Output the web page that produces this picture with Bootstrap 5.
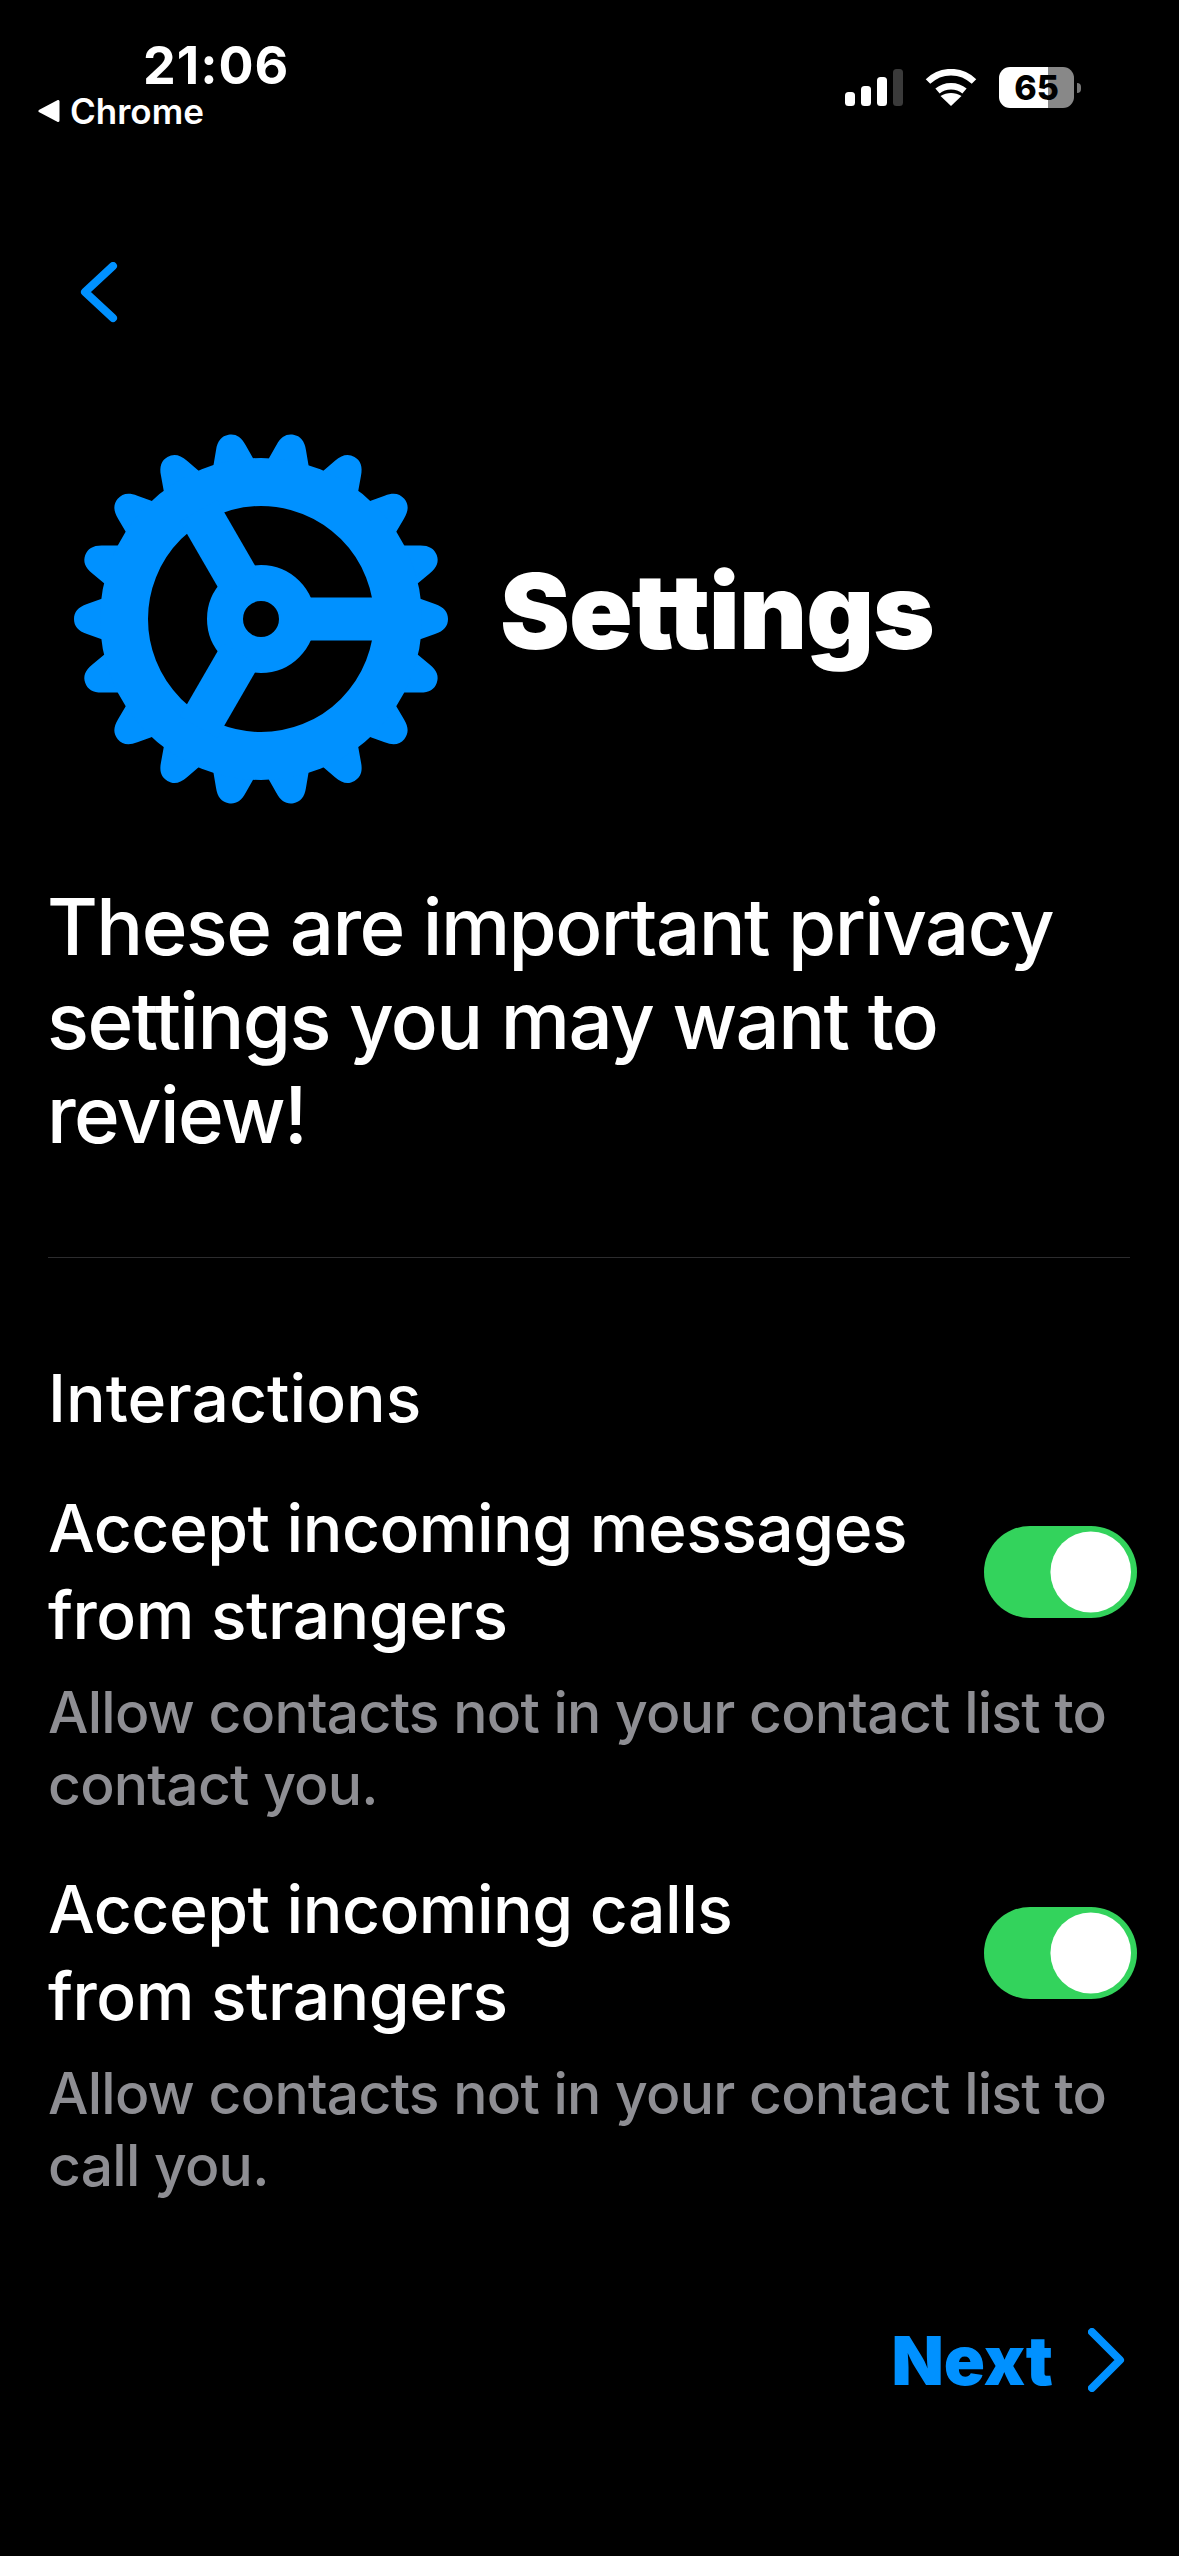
<!DOCTYPE html>
<html lang="en">
<head>
  <meta charset="UTF-8" />
  <meta name="viewport" content="width=device-width, initial-scale=1" />
  <title>Settings</title>
  <link href="https://cdn.jsdelivr.net/npm/bootstrap@5.3.0/dist/css/bootstrap.min.css" rel="stylesheet" />
  <style>
    body {
      background-color: #000;
      color: #fff;
      font-family: Inter, "Liberation Sans", sans-serif;
    }
    .phone-page {
      width: 1179px;
      height: 2556px;
      overflow: hidden;
    }
    .status-strip {
      height: 130px;
      padding: 45px 98px 0 38px;
    }
    .status-time {
      font-size: 52px;
      font-weight: 700;
      line-height: 42px;
      margin-left: 105px;
      letter-spacing: 1px;
    }
    .status-app {
      font-size: 35px;
      font-weight: 600;
      line-height: 36px;
      margin-top: 6px;
    }
    .status-icons {
      margin-top: 22px;
      height: 41px;
      gap: 22px;
    }
    .battery-box {
      width: 75px;
      height: 41px;
      border-radius: 11px;
      background: linear-gradient(90deg, #fff 49px, #888 49px);
      color: #000;
      font-size: 34px;
      font-weight: 800;
      line-height: 41px;
      text-align: center;
    }
    .battery-nub {
      width: 4px;
      height: 10px;
      margin-left: -19px;
      background: #777;
      border-radius: 0 4px 4px 0;
    }
    .back-row {
      padding: 132px 0 0 80px;
      height: 192px;
    }
    .app-head {
      padding: 110px 0 0 74px;
      gap: 52px;
    }
    .app-title {
      font-size: 105px;
      font-weight: 900;
      line-height: 1;
      margin: 0 0 18px;
      letter-spacing: -1px;
    }
    .intro-text {
      font-size: 78px;
      line-height: 94px;
      margin: 74px 40px 0 47px;
      font-weight: 500;
      letter-spacing: -1.6px;
    }
    .page-rule {
      margin: 95px 49px 0 48px;
      border-top: 1px solid #2c2c2e;
      opacity: 1;
    }
    .group-title {
      font-size: 66px;
      font-weight: 500;
      line-height: 80px;
      margin: 100px 48px 0;
    }
    .pref-row {
      margin: 0 42px 0 48px;
      gap: 20px;
    }
    .pref-row-first {
      margin-top: 47px;
    }
    .pref-row-next {
      margin-top: 45px;
    }
    .pref-name {
      font-size: 66px;
      font-weight: 500;
      line-height: 87px;
      letter-spacing: -0.5px;
    }
    .pref-note {
      font-size: 57px;
      line-height: 72px;
      color: #8e8e93;
      font-weight: 500;
      margin-top: 18px;
      letter-spacing: -0.75px;
    }
    .pref-switch {
      padding: 0;
      margin: 0;
      min-height: 0;
    }
    .pref-switch .form-check-input,
    .pref-switch .form-check-input:checked {
      width: 153px;
      height: 92px;
      margin: 0;
      border: 0;
      border-radius: 46px;
      background-color: #33d35c;
      background-size: 108px 108px;
      background-position: right -7.5px center;
    }
    .next-link {
      color: #0091ff;
      font-size: 68px;
      font-weight: 900;
      line-height: 1;
      text-decoration: none;
    }
    .next-row {
      margin-top: 124px;
      padding-right: 53px;
      gap: 35px;
    }
  </style>
</head>
<body>
  <div class="phone-page">
    <div class="status-strip d-flex justify-content-between align-items-start">
      <div>
        <div class="status-time">21:06</div>
        <div class="status-app d-flex align-items-center gap-2">
          <svg width="24" height="22" viewBox="0 0 24 22"><path d="M2 11 20 1.500V20.500Z" fill="#fff" stroke="#fff" stroke-width="3" stroke-linejoin="round"/></svg>
          <span>Chrome</span>
        </div>
      </div>
      <div class="status-icons d-flex align-items-center">
        <svg width="58" height="37" viewBox="0 0 58 37">
          <rect x="0" y="23" width="10" height="14" rx="3.500" fill="#fff"/>
          <rect x="16" y="17" width="10" height="20" rx="3.500" fill="#fff"/>
          <rect x="32" y="8" width="10" height="29" rx="3.500" fill="#fff"/>
          <rect x="48" y="0" width="10" height="37" rx="3.500" fill="#3a3a3a"/>
        </svg>
        <svg width="52" height="37" viewBox="0 0 52 37" fill="none" stroke="#fff" stroke-width="6.500">
          <path d="M3 12.500C16 0 36 0 49 12.500"/>
          <path d="M12.500 22C20 15.500 32 15.500 39.500 22"/>
          <path d="M26 37 15.500 27C22 23 30 23 36.500 27Z" fill="#fff" stroke="none"/>
        </svg>
        <div class="battery-box">65</div>
        <div class="battery-nub"></div>
      </div>
    </div>

    <div class="back-row">
      <svg width="40" height="64" viewBox="0 0 40 64" fill="none" stroke="#0091ff" stroke-width="8" stroke-linecap="round" stroke-linejoin="round">
        <path d="M33 4 5 30 33 56" />
      </svg>
    </div>

    <div class="app-head d-flex align-items-center">
      <svg width="374" height="374" viewBox="-187 -187 374 374" fill="#0091ff">
        <defs>
          <path id="gearTooth" d="M150-22 160-20 174-15C183-12 187-7 187 0 187 7 183 12 174 15L160 20 150 22Z" />
        </defs>
        <use href="#gearTooth" />
        <use href="#gearTooth" transform="rotate(20)" />
        <use href="#gearTooth" transform="rotate(40)" />
        <use href="#gearTooth" transform="rotate(60)" />
        <use href="#gearTooth" transform="rotate(80)" />
        <use href="#gearTooth" transform="rotate(100)" />
        <use href="#gearTooth" transform="rotate(120)" />
        <use href="#gearTooth" transform="rotate(140)" />
        <use href="#gearTooth" transform="rotate(160)" />
        <use href="#gearTooth" transform="rotate(180)" />
        <use href="#gearTooth" transform="rotate(200)" />
        <use href="#gearTooth" transform="rotate(220)" />
        <use href="#gearTooth" transform="rotate(240)" />
        <use href="#gearTooth" transform="rotate(260)" />
        <use href="#gearTooth" transform="rotate(280)" />
        <use href="#gearTooth" transform="rotate(300)" />
        <use href="#gearTooth" transform="rotate(320)" />
        <use href="#gearTooth" transform="rotate(340)" />
        <circle r="137" fill="none" stroke="#0091ff" stroke-width="48" />
        <circle r="36" fill="none" stroke="#0091ff" stroke-width="36" />
        <g stroke="#0091ff" stroke-width="43">
          <path d="M40 0H125" />
          <path d="M40 0H125" transform="rotate(120)" />
          <path d="M40 0H125" transform="rotate(240)" />
        </g>
      </svg>
      <h1 class="app-title">Settings</h1>
    </div>

    <p class="intro-text">These are important privacy settings you may want to review!</p>
    <hr class="page-rule" />

    <div class="group-title">Interactions</div>

    <div class="pref-row pref-row-first d-flex justify-content-between align-items-center">
      <div class="pref-name">Accept incoming messages<br />from strangers</div>
      <div class="form-check form-switch pref-switch">
        <input class="form-check-input" type="checkbox" role="switch" checked aria-label="Accept incoming messages from strangers" />
      </div>
    </div>
    <div class="pref-row pref-note">Allow contacts not in your contact list to contact you.</div>

    <div class="pref-row pref-row-next d-flex justify-content-between align-items-center">
      <div class="pref-name">Accept incoming calls<br />from strangers</div>
      <div class="form-check form-switch pref-switch">
        <input class="form-check-input" type="checkbox" role="switch" checked aria-label="Accept incoming calls from strangers" />
      </div>
    </div>
    <div class="pref-row pref-note">Allow contacts not in your contact list to call you.</div>

    <div class="next-row d-flex justify-content-end align-items-center">
      <a class="next-link" href="#">Next</a>
      <svg width="38" height="64" viewBox="0 0 38 64" fill="none" stroke="#0091ff" stroke-width="8" stroke-linecap="round" stroke-linejoin="round">
        <path d="M4 4 32 32 4 60" />
      </svg>
    </div>
  </div>
  <script src="https://cdn.jsdelivr.net/npm/bootstrap@5.3.0/dist/js/bootstrap.bundle.min.js"></script>
</body>
</html>
